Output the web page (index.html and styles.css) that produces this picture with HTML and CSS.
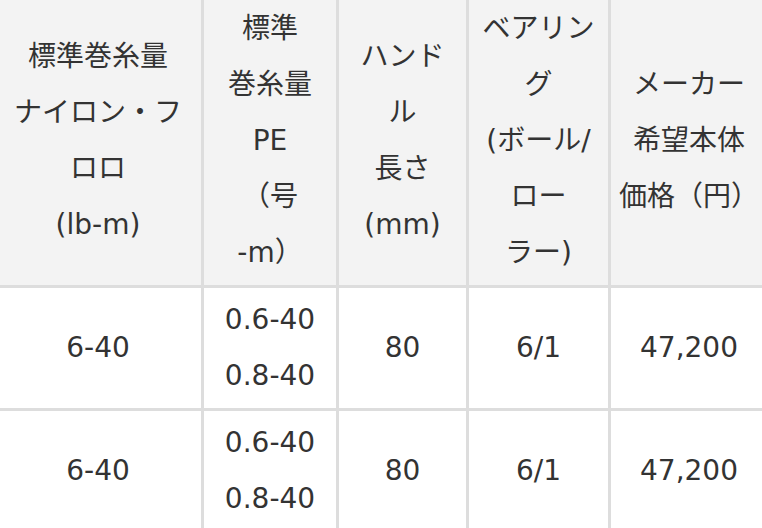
FILE: index.html
```html
<!DOCTYPE html>
<html lang="ja">
<head>
<meta charset="utf-8">
<title>スペック</title>
<link rel="stylesheet" href="styles.css">
</head>
<body>
<table class="spec">
  <colgroup>
    <col class="c1">
    <col class="c2">
    <col class="c3">
    <col class="c4">
    <col class="c5">
  </colgroup>
  <thead>
    <tr>
      <th>標準巻糸量<br>ナイロン・フ<br>ロロ<br>(lb-m)</th>
      <th>標準<br>巻糸量<br>PE<br>（号<br>-m）</th>
      <th>ハンド<br>ル<br>長さ<br>(mm)</th>
      <th>ベアリン<br>グ<br>(ボール/<br>ロー<br>ラー)</th>
      <th>メーカー<br>希望本体<br>価格（円）</th>
    </tr>
  </thead>
  <tbody>
    <tr>
      <td>6-40</td>
      <td>0.6-40<br>0.8-40</td>
      <td>80</td>
      <td>6/1</td>
      <td>47,200</td>
    </tr>
    <tr>
      <td>6-40</td>
      <td>0.6-40<br>0.8-40</td>
      <td>80</td>
      <td>6/1</td>
      <td>47,200</td>
    </tr>
  </tbody>
</table>
</body>
</html>
```

FILE: styles.css
```css
html, body {
  margin: 0;
  padding: 0;
  background: #ffffff;
  overflow: hidden;
}

.spec {
  border-collapse: collapse;
  table-layout: fixed;
  width: 775px;
  margin-left: -8px;
  margin-top: -6px;
  font-family: "DejaVu Sans", "Noto Sans CJK JP", sans-serif;
  font-size: 28px;
  line-height: 56px;
  color: #333333;
}

.c1 { width: 209px; }
.c2 { width: 135px; }
.c3 { width: 130px; }
.c4 { width: 142px; }
.c5 { width: 159px; }

.spec th,
.spec td {
  border: 3px solid #dddddd;
  padding: 4px 2px;
  text-align: center;
  vertical-align: middle;
  white-space: nowrap;
  font-weight: normal;
}

.spec th {
  background: #f3f3f3;
}

.spec td {
  background: #ffffff;
}
```
